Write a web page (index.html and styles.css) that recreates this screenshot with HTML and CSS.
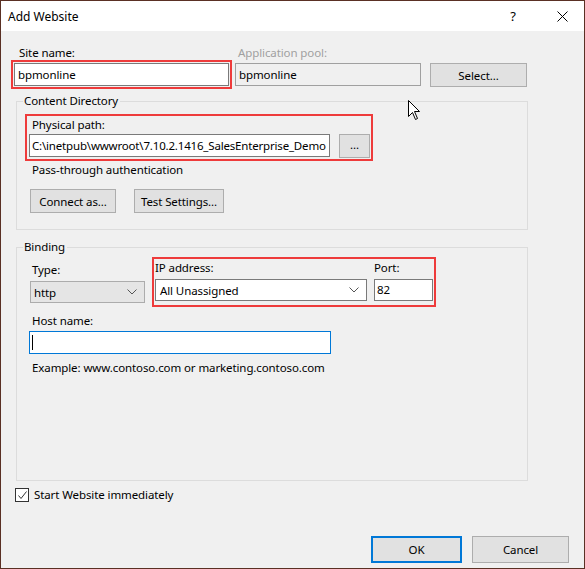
FILE: index.html
```html
<!DOCTYPE html>
<html>
<head>
<meta charset="utf-8">
<link rel="stylesheet" href="styles.css">
</head>
<body>
<div class="window">
  <div class="titlebar">
    <span class="title">Add Website</span>
    <span class="help">?</span>
    <span class="close"><svg width="11" height="11" viewBox="0 0 11 11"><path d="M0.5 0.5 L10.5 10.5 M10.5 0.5 L0.5 10.5" stroke="#000" stroke-width="1" fill="none"/></svg></span>
  </div>
  <div class="content">
    <div class="row1">
      <div class="col-site">
        <div class="label">Site name:</div>
        <div class="input site-input">bpmonline</div>
      </div>
      <div class="col-pool">
        <div class="label disabled">Application pool:</div>
        <div class="input pool-input">bpmonline</div>
      </div>
      <div class="col-select">
        <div class="btn select-btn">Select...</div>
      </div>
    </div>

    <div class="group group-content">
      <div class="legend">Content Directory</div>
      <div class="redbox path-box">
        <div class="label path-label">Physical path:</div>
        <div class="path-row">
          <div class="input path-input">C:\inetpub\wwwroot\7.10.2.1416_SalesEnterprise_Demo</div>
          <div class="btn dots-btn">...</div>
        </div>
      </div>
      <div class="label pass-label">Pass-through authentication</div>
      <div class="btn-row">
        <div class="btn connect-btn">Connect as...</div>
        <div class="btn test-btn">Test Settings...</div>
      </div>
    </div>

    <div class="group group-binding">
      <div class="legend">Binding</div>
      <div class="binding-row">
        <div class="col-type">
          <div class="label">Type:</div>
          <div class="combo type-combo"><span>http</span><svg class="chev" width="10" height="6" viewBox="0 0 10 6"><path d="M0.5 0.5 L5 5 L9.5 0.5" stroke="#555" stroke-width="1" fill="none"/></svg></div>
        </div>
        <div class="redbox ip-box">
          <div class="col-ip">
            <div class="label">IP address:</div>
            <div class="combo ip-combo"><span>All Unassigned</span><svg class="chev" width="10" height="6" viewBox="0 0 10 6"><path d="M0.5 0.5 L5 5 L9.5 0.5" stroke="#555" stroke-width="1" fill="none"/></svg></div>
          </div>
          <div class="col-port">
            <div class="label">Port:</div>
            <div class="input port-input">82</div>
          </div>
        </div>
      </div>
      <div class="label host-label">Host name:</div>
      <div class="input host-input"><span class="caret"></span></div>
      <div class="label example">Example: www.contoso.com or marketing.contoso.com</div>
    </div>

    <div class="check-row">
      <span class="checkbox"><svg width="11" height="11" viewBox="0 0 11 11"><path d="M1.5 5.5 L4 8.5 L9.5 1.5" stroke="#333" stroke-width="1" fill="none"/></svg></span>
      <span class="check-label">Start Website immediately</span>
    </div>

    <div class="footer">
      <div class="btn ok-btn">OK</div>
      <div class="btn cancel-btn">Cancel</div>
    </div>
  </div>
  <svg class="cursor" width="13" height="21" viewBox="0 0 13 21"><path d="M0.5 0.5 L0.5 16.5 L4.5 12.5 L7.5 19.5 L9.5 18.5 L6.5 11.5 L11.5 11.5 Z" fill="#fff" stroke="#000" stroke-width="1" stroke-linejoin="miter"/></svg>
</div>
</body>
</html>
```

FILE: styles.css
```css
* { box-sizing: border-box; }
html, body { margin: 0; padding: 0; }
body {
  width: 585px;
  height: 569px;
  font-family: "Noto Sans", "Open Sans", sans-serif;
  font-size: 11.5px;
  letter-spacing: -0.1px;
  color: #000;
  background: #f0f0f0;
}
.window {
  position: relative;
  width: 585px;
  height: 569px;
  border: 1px solid #5a3024;
  background: #f0f0f0;
  display: flex;
  flex-direction: column;
  overflow: hidden;
}
.titlebar {
  height: 30px;
  background: #fff;
  display: flex;
  align-items: center;
  padding-left: 7px;
}
.title { flex: 1; font-size: 12px; letter-spacing: 0; }
.help { width: 22px; text-align: center; margin-right: 33px; font-size: 13px; }
.close { width: 11px; height: 11px; margin-right: 16px; display: flex; }
.content {
  flex: 1;
  display: flex;
  flex-direction: column;
  padding: 14px 0 0 0;
}
.label { line-height: 16px; height: 16px; white-space: nowrap; }
.disabled { color: #a0a0a0; }
.input {
  background: #fff;
  border: 1px solid #7a7a7a;
  line-height: 21px;
  padding-left: 3px;
  white-space: nowrap;
  overflow: hidden;
}
.btn {
  background: #e1e1e1;
  border: 1px solid #adadad;
  display: flex;
  align-items: center;
  justify-content: center;
}
.row1 {
  display: flex;
  padding-left: 13px;
}
.col-site .label { padding-left: 5px; margin-bottom: 2px; }
.site-input {
  width: 215px;
  height: 23px;
  outline: 2px solid #ee3b3b;
  outline-offset: 1px;
}
.col-pool { margin-left: 6px; }
.col-pool .label { padding-left: 3px; margin-bottom: 2px; }
.pool-input {
  width: 186px;
  height: 23px;
  background: #f0f0f0;
  border-color: #a0a0a0;
}
.col-select { margin-left: 9px; padding-top: 18px; }
.select-btn { width: 97px; height: 24px; }

.group {
  margin-left: 15px;
  width: 512px;
  border: 1px solid #dcdcdc;
  display: flex;
  flex-direction: column;
}
.legend {
  align-self: flex-start;
  margin: -9px 0 0 6px;
  padding: 0 2px 0 1px;
  background: #f0f0f0;
  line-height: 16px;
  height: 16px;
}
.group-content { margin-top: 14px; height: 129px; }
.path-box {
  margin: 5px 0 0 8px;
  width: 348px;
  padding: 0 1px 1px 2px;
}
.redbox { border: 2px solid #ee3b3b; }
.path-label { padding-left: 3px; margin: 1px 0 1px 0; }
.path-row { display: flex; align-items: flex-start; }
.path-input { width: 301px; height: 23px; padding-left: 2px; letter-spacing: -0.18px; }
.dots-btn { width: 31px; height: 24px; margin-left: 9px; padding-bottom: 4px; }
.pass-label { margin: 1px 0 0 15px; }
.btn-row { display: flex; margin: 11px 0 0 13px; }
.connect-btn { width: 86px; height: 24px; }
.test-btn { width: 90px; height: 24px; margin-left: 18px; }

.group-binding { margin-top: 17px; height: 234px; }
.binding-row { display: flex; align-items: flex-start; margin-top: 2px; }
.col-type { margin: 5px 0 0 13px; }
.col-type .label { padding-left: 2px; margin-bottom: 3px; }
.combo {
  height: 22px;
  display: flex;
  align-items: center;
  justify-content: space-between;
  padding: 0 7px 0 3px;
  border: 1px solid #acacac;
}
.type-combo { width: 115px; background: #e5e5e5; }
.ip-combo { width: 212px; background: #fff; border-color: #7a7a7a; padding-left: 4px; }
.ip-box {
  display: flex;
  margin-left: 7px;
  padding: 1px 1px 4px 1px;
}
.ip-box .label { margin-bottom: 3px; }
.col-port { margin-left: 7px; }
.port-input { width: 59px; height: 22px; line-height: 20px; padding-left: 2px; }
.host-label { margin: 6px 0 0 15px; }
.host-input {
  margin: 2px 0 0 12px;
  width: 302px;
  height: 23px;
  border-color: #0078d7;
  display: flex;
  align-items: center;
  padding-left: 2px;
}
.caret { width: 1px; height: 15px; background: #000; }
.example { margin: 6px 0 0 15px; }

.check-row {
  display: flex;
  align-items: center;
  margin: 6px 0 0 14px;
  height: 16px;
}
.checkbox {
  width: 14px;
  height: 14px;
  border: 1px solid #333;
  background: #fff;
  display: flex;
  align-items: center;
  justify-content: center;
}
.check-label { margin-left: 5px; line-height: 16px; }
.footer {
  display: flex;
  margin: 33px 0 0 370px;
}
.ok-btn { width: 91px; height: 27px; border: 2px solid #0078d7; }
.cancel-btn { width: 97px; height: 27px; margin-left: 10px; }
.cursor { position: absolute; left: 407px; top: 99px; }
```
